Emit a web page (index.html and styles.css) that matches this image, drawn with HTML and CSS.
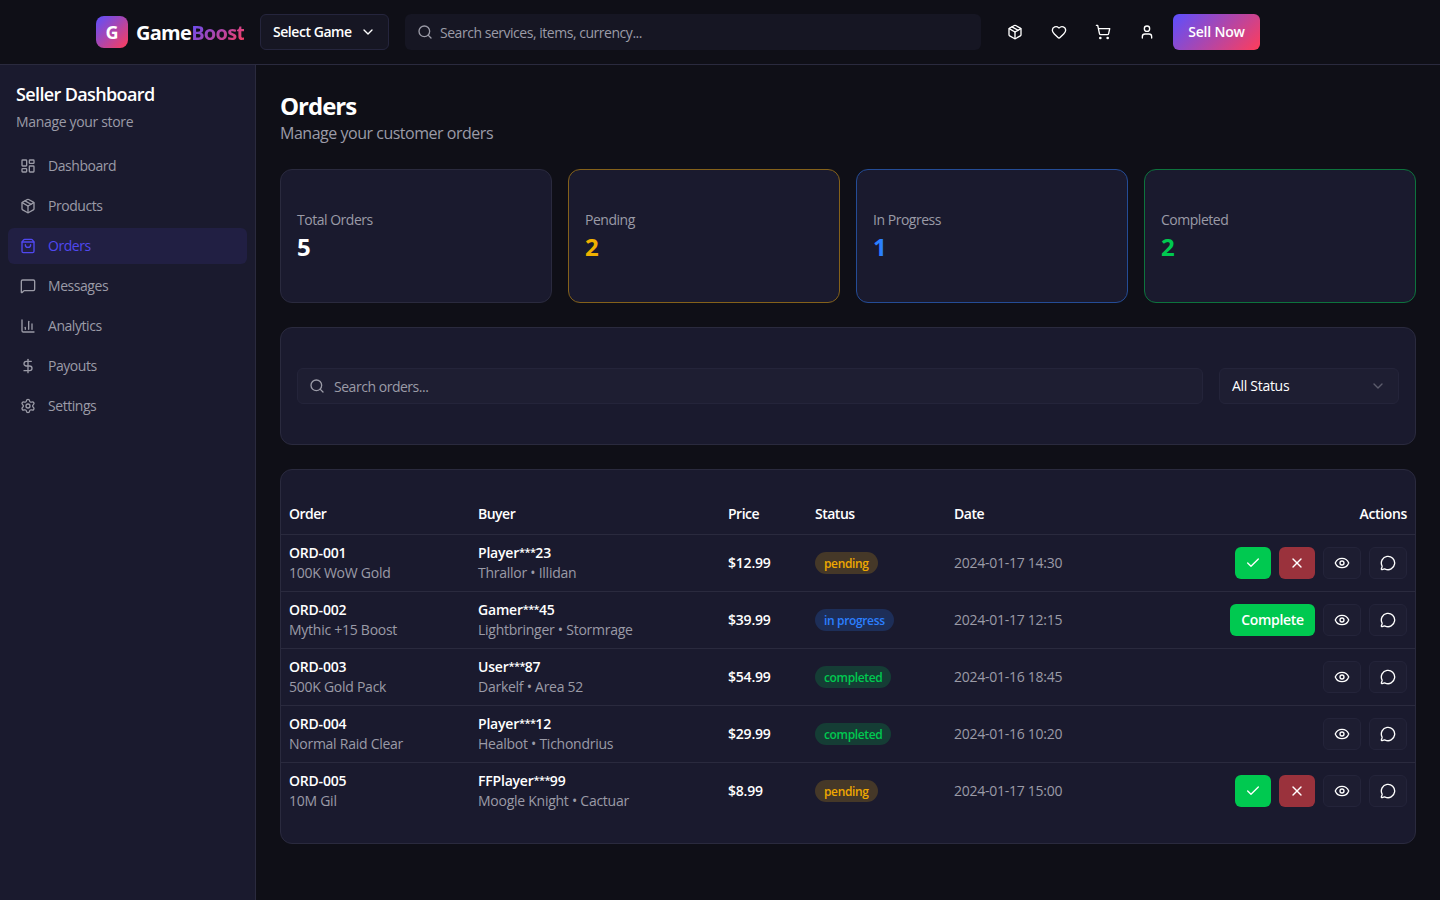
FILE: index.html
```html
<!DOCTYPE html>
<html lang="en">
<head>
  <meta charset="UTF-8">
  <meta name="viewport" content="width=device-width, initial-scale=1.0">
  <title>GameBoost - Orders</title>
  <link rel="stylesheet" href="styles.css">
</head>
<body>
  <!-- Icon sprite -->
  <svg class="sprite" aria-hidden="true">
    <symbol id="i-package" viewBox="0 0 24 24"><path d="M11 21.73a2 2 0 0 0 2 0l7-4A2 2 0 0 0 21 16V8a2 2 0 0 0-1-1.73l-7-4a2 2 0 0 0-2 0l-7 4A2 2 0 0 0 3 8v8a2 2 0 0 0 1 1.73z"/><path d="M12 22V12"/><path d="M3.29 7 12 12l8.71-5"/><path d="m7.5 4.27 9 5.15"/></symbol>
    <symbol id="i-heart" viewBox="0 0 24 24"><path d="M2 9.5a5.5 5.5 0 0 1 9.591-3.676.56.56 0 0 0 .818 0A5.49 5.49 0 0 1 22 9.5c0 2.29-1.5 4-3 5.5l-5.492 5.313a2 2 0 0 1-3 .019L5 15c-1.5-1.5-3-3.2-3-5.5"/></symbol>
    <symbol id="i-cart" viewBox="0 0 24 24"><circle cx="8" cy="21" r="1"/><circle cx="19" cy="21" r="1"/><path d="M2.05 2.05h2l2.66 12.42a2 2 0 0 0 2 1.58h9.78a2 2 0 0 0 1.95-1.57l1.65-7.43H5.12"/></symbol>
    <symbol id="i-user" viewBox="0 0 24 24"><path d="M19 21v-2a4 4 0 0 0-4-4H9a4 4 0 0 0-4 4v2"/><circle cx="12" cy="7" r="4"/></symbol>
    <symbol id="i-search" viewBox="0 0 24 24"><circle cx="11" cy="11" r="8"/><path d="m21 21-4.34-4.34"/></symbol>
    <symbol id="i-down" viewBox="0 0 24 24"><path d="m6 9 6 6 6-6"/></symbol>
    <symbol id="i-dashboard" viewBox="0 0 24 24"><rect width="7" height="9" x="3" y="3" rx="1"/><rect width="7" height="5" x="14" y="3" rx="1"/><rect width="7" height="9" x="14" y="12" rx="1"/><rect width="7" height="5" x="3" y="16" rx="1"/></symbol>
    <symbol id="i-bag" viewBox="0 0 24 24"><path d="M16 10a4 4 0 0 1-8 0"/><path d="M3.103 6.034h17.794"/><path d="M3.4 5.467a2 2 0 0 0-.4 1.2V20a2 2 0 0 0 2 2h14a2 2 0 0 0 2-2V6.667a2 2 0 0 0-.4-1.2l-2-2.667A2 2 0 0 0 17 2H7a2 2 0 0 0-1.6.8z"/></symbol>
    <symbol id="i-message" viewBox="0 0 24 24"><path d="M22 17a2 2 0 0 1-2 2H6.828a2 2 0 0 0-1.414.586l-2.202 2.202A.71.71 0 0 1 2 21.286V5a2 2 0 0 1 2-2h16a2 2 0 0 1 2 2z"/></symbol>
    <symbol id="i-chart" viewBox="0 0 24 24"><path d="M3 3v16a2 2 0 0 0 2 2h16"/><path d="M18 17V9"/><path d="M13 17V5"/><path d="M8 17v-3"/></symbol>
    <symbol id="i-dollar" viewBox="0 0 24 24"><path d="M12 2v20"/><path d="M17 5H9.5a3.5 3.5 0 0 0 0 7h5a3.5 3.5 0 0 1 0 7H6"/></symbol>
    <symbol id="i-settings" viewBox="0 0 24 24"><path d="M9.671 4.136a2.34 2.34 0 0 1 4.659 0 2.34 2.34 0 0 0 3.319 1.915 2.34 2.34 0 0 1 2.33 4.033 2.34 2.34 0 0 0 0 3.831 2.34 2.34 0 0 1-2.33 4.033 2.34 2.34 0 0 0-3.319 1.915 2.34 2.34 0 0 1-4.659 0 2.34 2.34 0 0 0-3.32-1.915 2.34 2.34 0 0 1-2.33-4.033 2.34 2.34 0 0 0 0-3.831A2.34 2.34 0 0 1 6.35 6.051a2.34 2.34 0 0 0 3.319-1.915"/><circle cx="12" cy="12" r="3"/></symbol>
    <symbol id="i-check" viewBox="0 0 24 24"><path d="M20 6 9 17l-5-5"/></symbol>
    <symbol id="i-x" viewBox="0 0 24 24"><path d="M18 6 6 18"/><path d="m6 6 12 12"/></symbol>
    <symbol id="i-eye" viewBox="0 0 24 24"><path d="M2.062 12.348a1 1 0 0 1 0-.696 10.75 10.75 0 0 1 19.876 0 1 1 0 0 1 0 .696 10.75 10.75 0 0 1-19.876 0"/><circle cx="12" cy="12" r="3"/></symbol>
    <symbol id="i-chat" viewBox="0 0 24 24"><path d="M2.992 16.342a2 2 0 0 1 .094 1.167l-1.065 3.29a1 1 0 0 0 1.236 1.168l3.413-.998a2 2 0 0 1 1.099.092 10 10 0 1 0-4.777-4.719"/></symbol>
  </svg>

  <header class="header">
    <a href="#" class="logo">
      <span class="logo-mark">G</span>
      <span class="logo-text">Game<span class="logo-accent">Boost</span></span>
    </a>
    <button class="game-select">Select Game <svg class="icon"><use href="#i-down"/></svg></button>
    <div class="header-search">
      <svg class="icon"><use href="#i-search"/></svg>
      <span class="placeholder">Search services, items, currency...</span>
    </div>
    <div class="header-actions">
      <button class="icon-btn"><svg class="icon"><use href="#i-package"/></svg></button>
      <button class="icon-btn"><svg class="icon"><use href="#i-heart"/></svg></button>
      <button class="icon-btn"><svg class="icon"><use href="#i-cart"/></svg></button>
      <button class="icon-btn"><svg class="icon"><use href="#i-user"/></svg></button>
      <button class="sell-btn">Sell Now</button>
    </div>
  </header>

  <div class="layout">
    <aside class="sidebar">
      <div class="sidebar-head">
        <h2>Seller Dashboard</h2>
        <p>Manage your store</p>
      </div>
      <nav class="nav">
        <a href="#" class="nav-item"><svg class="icon"><use href="#i-dashboard"/></svg>Dashboard</a>
        <a href="#" class="nav-item"><svg class="icon"><use href="#i-package"/></svg>Products</a>
        <a href="#" class="nav-item active"><svg class="icon"><use href="#i-bag"/></svg>Orders</a>
        <a href="#" class="nav-item"><svg class="icon"><use href="#i-message"/></svg>Messages</a>
        <a href="#" class="nav-item"><svg class="icon"><use href="#i-chart"/></svg>Analytics</a>
        <a href="#" class="nav-item"><svg class="icon"><use href="#i-dollar"/></svg>Payouts</a>
        <a href="#" class="nav-item"><svg class="icon"><use href="#i-settings"/></svg>Settings</a>
      </nav>
    </aside>

    <main class="main">
      <div class="page-head">
        <h1>Orders</h1>
        <p>Manage your customer orders</p>
      </div>

      <div class="stats">
        <div class="card stat-card">
          <div class="stat-label">Total Orders</div>
          <div class="stat-number">5</div>
        </div>
        <div class="card stat-card stat-pending">
          <div class="stat-label">Pending</div>
          <div class="stat-number">2</div>
        </div>
        <div class="card stat-card stat-progress">
          <div class="stat-label">In Progress</div>
          <div class="stat-number">1</div>
        </div>
        <div class="card stat-card stat-completed">
          <div class="stat-label">Completed</div>
          <div class="stat-number">2</div>
        </div>
      </div>

      <div class="card filters">
        <div class="field filter-search">
          <svg class="icon"><use href="#i-search"/></svg>
          <span class="placeholder">Search orders...</span>
        </div>
        <div class="field filter-status">
          <span>All Status</span>
          <svg class="icon"><use href="#i-down"/></svg>
        </div>
      </div>

      <div class="card orders">
        <table class="orders-table">
          <thead>
            <tr>
              <th class="col-order">Order</th>
              <th class="col-buyer">Buyer</th>
              <th class="col-price">Price</th>
              <th class="col-status">Status</th>
              <th class="col-date">Date</th>
              <th class="col-actions">Actions</th>
            </tr>
          </thead>
          <tbody>
            <tr>
              <td><div class="strong">ORD-001</div><div class="muted">100K WoW Gold</div></td>
              <td><div class="strong">Player<span class="mask">***</span>23</div><div class="muted">Thrallor • Illidan</div></td>
              <td class="strong">$12.99</td>
              <td><span class="badge badge-pending">pending</span></td>
              <td class="date">2024-01-17 14:30</td>
              <td>
                <div class="actions">
                  <button class="btn btn-accept"><svg class="icon"><use href="#i-check"/></svg></button>
                  <button class="btn btn-reject"><svg class="icon"><use href="#i-x"/></svg></button>
                  <button class="btn btn-outline"><svg class="icon"><use href="#i-eye"/></svg></button>
                  <button class="btn btn-outline"><svg class="icon"><use href="#i-chat"/></svg></button>
                </div>
              </td>
            </tr>
            <tr>
              <td><div class="strong">ORD-002</div><div class="muted">Mythic +15 Boost</div></td>
              <td><div class="strong">Gamer<span class="mask">***</span>45</div><div class="muted">Lightbringer • Stormrage</div></td>
              <td class="strong">$39.99</td>
              <td><span class="badge badge-progress">in progress</span></td>
              <td class="date">2024-01-17 12:15</td>
              <td>
                <div class="actions">
                  <button class="btn btn-accept btn-complete">Complete</button>
                  <button class="btn btn-outline"><svg class="icon"><use href="#i-eye"/></svg></button>
                  <button class="btn btn-outline"><svg class="icon"><use href="#i-chat"/></svg></button>
                </div>
              </td>
            </tr>
            <tr>
              <td><div class="strong">ORD-003</div><div class="muted">500K Gold Pack</div></td>
              <td><div class="strong">User<span class="mask">***</span>87</div><div class="muted">Darkelf • Area 52</div></td>
              <td class="strong">$54.99</td>
              <td><span class="badge badge-completed">completed</span></td>
              <td class="date">2024-01-16 18:45</td>
              <td>
                <div class="actions">
                  <button class="btn btn-outline"><svg class="icon"><use href="#i-eye"/></svg></button>
                  <button class="btn btn-outline"><svg class="icon"><use href="#i-chat"/></svg></button>
                </div>
              </td>
            </tr>
            <tr>
              <td><div class="strong">ORD-004</div><div class="muted">Normal Raid Clear</div></td>
              <td><div class="strong">Player<span class="mask">***</span>12</div><div class="muted">Healbot • Tichondrius</div></td>
              <td class="strong">$29.99</td>
              <td><span class="badge badge-completed">completed</span></td>
              <td class="date">2024-01-16 10:20</td>
              <td>
                <div class="actions">
                  <button class="btn btn-outline"><svg class="icon"><use href="#i-eye"/></svg></button>
                  <button class="btn btn-outline"><svg class="icon"><use href="#i-chat"/></svg></button>
                </div>
              </td>
            </tr>
            <tr>
              <td><div class="strong">ORD-005</div><div class="muted">10M Gil</div></td>
              <td><div class="strong">FFPlayer<span class="mask">***</span>99</div><div class="muted">Moogle Knight • Cactuar</div></td>
              <td class="strong">$8.99</td>
              <td><span class="badge badge-pending">pending</span></td>
              <td class="date">2024-01-17 15:00</td>
              <td>
                <div class="actions">
                  <button class="btn btn-accept"><svg class="icon"><use href="#i-check"/></svg></button>
                  <button class="btn btn-reject"><svg class="icon"><use href="#i-x"/></svg></button>
                  <button class="btn btn-outline"><svg class="icon"><use href="#i-eye"/></svg></button>
                  <button class="btn btn-outline"><svg class="icon"><use href="#i-chat"/></svg></button>
                </div>
              </td>
            </tr>
          </tbody>
        </table>
      </div>
    </main>
  </div>
</body>
</html>
```

FILE: styles.css
```css
* {
  margin: 0;
  padding: 0;
  box-sizing: border-box;
}

body {
  height: 100vh;
  overflow: hidden;
  display: flex;
  flex-direction: column;
  font-family: 'Segoe UI', 'Open Sans', 'Noto Sans', sans-serif;
  font-size: 14px;
  line-height: 20px;
  letter-spacing: -0.2px;
  color: #ffffff;
  background: #0f0f17;
}

a {
  color: inherit;
  text-decoration: none;
}

button {
  font: inherit;
  letter-spacing: inherit;
  color: inherit;
  background: none;
  border: none;
  cursor: pointer;
}

.sprite {
  display: none;
}

.icon {
  width: 16px;
  height: 16px;
  flex-shrink: 0;
  fill: none;
  stroke: currentColor;
  stroke-width: 2;
  stroke-linecap: round;
  stroke-linejoin: round;
}

.placeholder {
  padding-top: 2px;
  letter-spacing: -0.47px;
}

/* Header */
.header {
  height: 65px;
  flex-shrink: 0;
  display: flex;
  align-items: center;
  gap: 16px;
  padding: 0 96px;
  border-bottom: 1px solid #2a2a3e;
}

.logo {
  width: 148px;
  display: flex;
  align-items: center;
  gap: 8px;
}

.logo-mark {
  width: 32px;
  height: 32px;
  flex-shrink: 0;
  display: flex;
  align-items: center;
  justify-content: center;
  border-radius: 8px;
  background: linear-gradient(135deg, #5b4fff 0%, #ff3d5a 100%);
  font-size: 18px;
  font-weight: 700;
}

.logo-text {
  padding-top: 2px;
  font-size: 20px;
  line-height: 28px;
  font-weight: 700;
  letter-spacing: -0.72px;
}

.logo-accent {
  background: linear-gradient(135deg, #5b4fff 0%, #ff3d5a 100%);
  -webkit-background-clip: text;
  background-clip: text;
  color: transparent;
}

.game-select {
  width: 129px;
  height: 36px;
  flex-shrink: 0;
  display: flex;
  align-items: center;
  justify-content: space-between;
  padding: 0 12px;
  border: 1px solid #25253d;
  border-radius: 6px;
  background: #161623;
  font-weight: 600;
  letter-spacing: -0.45px;
  white-space: nowrap;
}

.header-search {
  width: 576px;
  height: 36px;
  display: flex;
  align-items: center;
  gap: 7px;
  padding: 0 12px;
  border-radius: 6px;
  background: #161623;
  color: #9b9ba7;
}

.header-actions {
  display: flex;
  align-items: center;
  gap: 8px;
}

.icon-btn {
  width: 36px;
  height: 36px;
  display: flex;
  align-items: center;
  justify-content: center;
}

.sell-btn {
  width: 87px;
  height: 36px;
  border-radius: 6px;
  background: linear-gradient(135deg, #5b4fff 0%, #ff3d5a 100%);
  font-weight: 600;
}

/* Sidebar */
.layout {
  flex: 1;
  display: flex;
  min-height: 0;
}

.sidebar {
  width: 256px;
  flex-shrink: 0;
  background: #1a1a2e;
  border-right: 1px solid #2a2a3e;
}

.sidebar-head {
  padding: 15px 16px 16px;
}

.sidebar-head h2 {
  font-size: 18px;
  line-height: 28px;
  font-weight: 600;
  letter-spacing: -0.63px;
  margin-bottom: 4px;
}

.sidebar-head p {
  letter-spacing: -0.33px;
  color: #9b9ba7;
}

.nav {
  display: flex;
  flex-direction: column;
  gap: 4px;
  padding: 0 8px;
}

.nav-item {
  height: 36px;
  display: flex;
  align-items: center;
  gap: 12px;
  padding: 0 12px;
  border-radius: 6px;
  letter-spacing: -0.45px;
  color: #9b9ba7;
}

.nav-item.active {
  background: #211f43;
  color: #5048f0;
}

/* Main */
.main {
  flex: 1;
  display: flex;
  flex-direction: column;
  gap: 24px;
  padding: 24px;
}

.page-head h1 {
  padding-top: 1px;
  font-size: 24px;
  line-height: 31px;
  font-weight: 700;
  letter-spacing: -1px;
}

.page-head p {
  font-size: 16px;
  line-height: 24px;
  letter-spacing: -0.48px;
  color: #9b9ba7;
}

.card {
  background: #1a1a2e;
  border: 1px solid #2a2a3e;
  border-radius: 12px;
}

.stats {
  display: grid;
  grid-template-columns: repeat(4, 1fr);
  gap: 16px;
}

.stat-card {
  padding: 40px 16px 39px;
}

.stat-label {
  margin-bottom: 1px;
  letter-spacing: -0.48px;
  color: #9b9ba7;
}

.stat-number {
  font-size: 24px;
  line-height: 32px;
  font-weight: 700;
}

.stat-pending { border-color: #84611a; }
.stat-pending .stat-number { color: #f0b100; }
.stat-progress { border-color: #244c96; }
.stat-progress .stat-number { color: #2b7fff; }
.stat-completed { border-color: #0d733d; }
.stat-completed .stat-number { color: #00c950; }

.filters {
  display: flex;
  gap: 16px;
  padding: 40px 16px;
}

.field {
  height: 36px;
  display: flex;
  align-items: center;
  padding: 0 12px;
  border: 1px solid #24243a;
  border-radius: 6px;
  background: #1e1e32;
}

.filter-search {
  flex: 1;
  gap: 9px;
  padding-left: 11px;
  color: #9b9ba7;
}

.filter-status {
  width: 180px;
  justify-content: space-between;
  letter-spacing: -0.3px;
}

.filter-status .icon {
  color: #9b9ba7;
  opacity: 0.5;
}

/* Orders table */
.orders {
  padding: 24px 0;
}

.orders-table {
  width: 100%;
  table-layout: fixed;
  border-collapse: separate;
  border-spacing: 0;
}

.orders-table th {
  height: 41px;
  padding: 0 8px;
  text-align: left;
  font-weight: 600;
  letter-spacing: -0.5px;
  border-bottom: 1px solid #2a2a3e;
}

.orders-table td {
  height: 57px;
  padding: 8px;
  vertical-align: middle;
  border-bottom: 1px solid #2a2a3e;
}

.orders-table tbody tr:last-child td {
  height: 56px;
  border-bottom: none;
}

.orders-table .col-order { width: 189px; }
.orders-table .col-buyer { width: 250px; }
.orders-table .col-price { width: 87px; }
.orders-table .col-status { width: 139px; }
.orders-table .col-date { width: 180px; }
.orders-table .col-actions {
  text-align: right;
  letter-spacing: -0.35px;
}

.strong {
  font-weight: 600;
}

.mask {
  font-size: 11px;
  line-height: 1;
  letter-spacing: -0.6px;
  vertical-align: 2px;
}

.muted,
.date {
  letter-spacing: -0.26px;
  color: #9b9ba7;
}

.badge {
  display: inline-flex;
  align-items: center;
  height: 22px;
  padding: 2px 9px 0;
  border-radius: 11px;
  font-size: 12px;
  line-height: 16px;
  font-weight: 600;
  letter-spacing: -0.35px;
  vertical-align: middle;
}

.badge-pending { background: #453828; color: #f0a800; }
.badge-progress { background: #1d2e58; color: #2b7fff; }
.badge-completed { background: #153d35; color: #00c950; }

.actions {
  display: flex;
  justify-content: flex-end;
  gap: 8px;
}

.btn {
  width: 36px;
  height: 32px;
  display: flex;
  align-items: center;
  justify-content: center;
  border-radius: 6px;
  font-weight: 600;
}

.btn-accept { background: #00c950; }
.btn-reject { background: #9a323c; }

.btn-complete {
  width: 85px;
  letter-spacing: -0.3px;
}

.btn-outline {
  width: 38px;
  border: 1px solid #24243a;
  background: #1d1d31;
}
```
